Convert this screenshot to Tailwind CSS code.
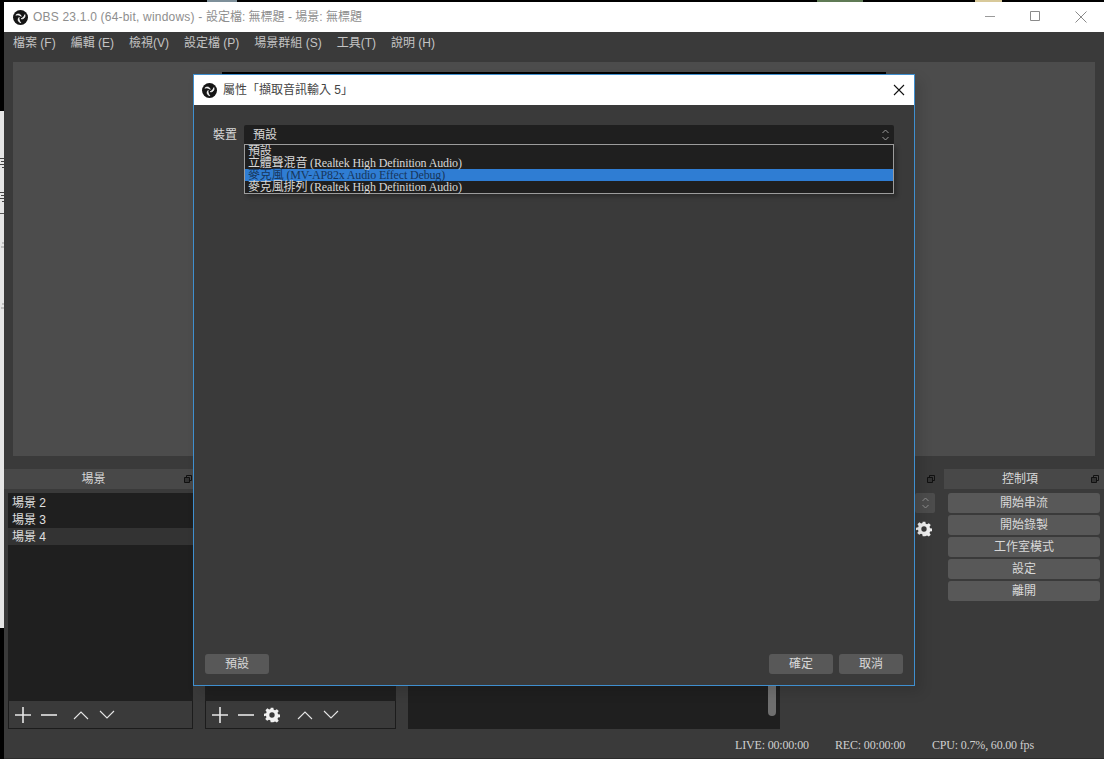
<!DOCTYPE html>
<html lang="zh-Hant">
<head>
<meta charset="UTF-8">
<title>OBS 23.1.0</title>
<script src="https://cdn.jsdelivr.net/npm/@tailwindcss/browser@4"></script>
</head>
<body class="w-[1104px] h-[759px] overflow-hidden bg-black relative font-['Liberation_Sans','Noto_Sans_CJK_TC',sans-serif] text-[12px] text-[#d8d8d8]">

<!-- desktop showing behind the window, only illegible scraps of it are visible -->
<div class="absolute left-0 top-[111px] w-[4px] h-[517px] bg-[#e6e6e6]">
  <svg class="w-[4px] h-[210px]" viewBox="0 0 4 210">
    <path d="M0 47.500h4M1 50.500h3M0 53.500h4M2 56.500h2M0 81.500h4M1 84.500h3M0 87.500h4M2 90.500h2" stroke="#444" fill="none"/>
    <path d="M0 102.500h4" stroke="#555" fill="none"/>
    <path d="M2 132h2M1 136h3M2 193h2M1 197h3" stroke="#999" fill="none"/>
  </svg>
</div>
<span class="absolute left-[207px] top-0 w-[30px] h-[2px] bg-[#7d8f99]"></span>
<span class="absolute left-[817px] top-0 w-[46px] h-[2px] bg-[#5f7a55]"></span>
<span class="absolute left-[975px] top-0 w-[27px] h-[2px] bg-[#d8c99a]"></span>

<!-- main OBS window -->
<div class="absolute left-[4px] top-[2px] w-[1100px] h-[757px] bg-[#3a3a3a] flex flex-col">
  <div class="h-[30px] bg-white flex items-center pl-[9px] shrink-0">
    <svg class="w-[15px] h-[15px]" viewBox="0 0 16 16">
      <circle cx="8" cy="8" r="8" fill="#151515"/>
      <path d="M3 5.500C5 3.500 8 4 8.800 6.800 7.800 5.800 5.500 4.900 3 5.500z" fill="#fff" stroke="#fff" stroke-width=".7"/>
      <path d="M3 5.500C5 3.500 8 4 8.800 6.800 7.800 5.800 5.500 4.900 3 5.500z" fill="#fff" stroke="#fff" stroke-width=".7" transform="rotate(120 8 8)"/>
      <path d="M3 5.500C5 3.500 8 4 8.800 6.800 7.800 5.800 5.500 4.900 3 5.500z" fill="#fff" stroke="#fff" stroke-width=".7" transform="rotate(240 8 8)"/>
    </svg>
    <span class="ml-[5px] text-[12px] text-[#8e8e8e]"><span class="tracking-[0.2px]">OBS 23.1.0 (64-bit, windows) - </span>設定檔: 無標題 - 場景: 無標題</span>
    <div class="ml-auto flex items-center">
      <svg class="w-[46px] h-[30px]" viewBox="0 0 46 30"><path d="M19 14.500h10" stroke="#9a9a9a" fill="none"/></svg>
      <svg class="w-[46px] h-[30px]" viewBox="0 0 46 30"><path d="M18.500 9.500h9v9h-9z" stroke="#8a8a8a" fill="none"/></svg>
      <svg class="w-[46px] h-[30px]" viewBox="0 0 46 30"><path d="M17.500 9.500l11 11M28.500 9.500l-11 11" stroke="#8a8a8a" fill="none"/></svg>
    </div>
  </div>

  <div class="h-[21px] flex items-center pl-[9px] gap-[15px] text-[#c4c4c4] shrink-0">
    <span>檔案 (F)</span><span>編輯 (E)</span><span>檢視(V)</span><span>設定檔 (P)</span><span>場景群組 (S)</span><span>工具(T)</span><span>說明 (H)</span>
  </div>

  <!-- preview area -->
  <div class="mt-[9px] ml-[9px] mr-[9px] h-[394px] bg-[#4c4c4c] shrink-0"></div>

  <!-- docks -->
  <div class="mt-[13px] flex h-[260px] shrink-0">
    <!-- scenes -->
    <div class="w-[189px] flex flex-col">
      <div class="h-[20px] bg-[#484848] flex items-center justify-center relative pr-[10px]">場景
        <svg class="absolute right-[1px] top-[6px] w-[8px] h-[8px]" viewBox="0 0 8 8"><path d="M2.500.5h5v5h-5z" stroke="#111" fill="none"/><path d="M.5 2.500h5v5h-5z" stroke="#111" fill="#333"/></svg>
      </div>
      <div class="ml-[4px] mt-[4px] h-[208px] bg-[#1f1f1f] pt-[1px] text-[12px] text-[#e0e0e0]">
        <div class="h-[17px] leading-[19px] pl-[4px]">場景 2</div>
        <div class="h-[17px] leading-[19px] pl-[4px]">場景 3</div>
        <div class="h-[17px] leading-[19px] pl-[4px] bg-[#333]">場景 4</div>
      </div>
      <div class="ml-[4px] h-[28px] bg-[#3a3a3a] border-x border-b border-[#1c1c1c] flex items-center pl-[6px] gap-[10px]">
        <svg class="w-[16px] h-[16px]" viewBox="0 0 16 16"><path d="M8 0v16M0 8h16" stroke="#e6e6e6" stroke-width="1.600"/></svg>
        <svg class="w-[16px] h-[16px]" viewBox="0 0 16 16"><path d="M0 8h16" stroke="#e6e6e6" stroke-width="1.600"/></svg>
        <svg class="w-[16px] h-[10px] ml-[6px]" viewBox="0 0 16 10"><path d="M1 9l7-7 7 7" stroke="#e6e6e6" fill="none" stroke-width="1.100"/></svg>
        <svg class="w-[16px] h-[10px]" viewBox="0 0 16 10"><path d="M1 1l7 7 7-7" stroke="#e6e6e6" fill="none" stroke-width="1.100"/></svg>
      </div>
    </div>

    <!-- sources -->
    <div class="ml-[12px] w-[191px] flex flex-col justify-end h-[260px]">
      <div class="h-[24px] bg-[#1f1f1f]"></div>
      <div class="h-[28px] bg-[#3a3a3a] border-x border-b border-[#1c1c1c] flex items-center pl-[6px] gap-[10px]">
        <svg class="w-[16px] h-[16px]" viewBox="0 0 16 16"><path d="M8 0v16M0 8h16" stroke="#e6e6e6" stroke-width="1.600"/></svg>
        <svg class="w-[16px] h-[16px]" viewBox="0 0 16 16"><path d="M0 8h16" stroke="#e6e6e6" stroke-width="1.600"/></svg>
        <svg class="w-[16px] h-[16px]" viewBox="0 0 24 24"><path fill="#f0f0f0" fill-rule="evenodd" d="M10 1h4l.6 3.200 2 .8L19.300 3.200l2.800 2.800-1.800 2.700.8 2 3.200.6v4l-3.200.6-.8 2 1.800 2.700-2.800 2.800-2.700-1.800-2 .8L14 23h-4l-.6-3.200-2-.8-2.700 1.800-2.800-2.800 1.800-2.700-.8-2L0 14v-4l3.200-.6.8-2L2.200 4.700 5 2l2.700 1.800 2-.8zM12 8a4 4 0 1 0 0 8 4 4 0 0 0 0-8z"/></svg>
        <svg class="w-[16px] h-[10px] ml-[7px]" viewBox="0 0 16 10"><path d="M1 9l7-7 7 7" stroke="#e6e6e6" fill="none" stroke-width="1.100"/></svg>
        <svg class="w-[16px] h-[10px]" viewBox="0 0 16 10"><path d="M1 1l7 7 7-7" stroke="#e6e6e6" fill="none" stroke-width="1.100"/></svg>
      </div>
    </div>

    <!-- mixer -->
    <div class="ml-[12px] w-[372px] h-[260px] flex flex-col justify-end">
      <div class="h-[52px] bg-[#1f1f1f] relative">
        <span class="absolute right-[4px] top-0 w-[8px] h-[39px] rounded-[4px] bg-[#6f6f6f]"></span>
      </div>
    </div>

    <!-- transitions -->
    <div class="ml-[8px] w-[152px] relative">
      <svg class="absolute right-[5px] top-[6px] w-[8px] h-[8px]" viewBox="0 0 8 8"><path d="M2.500.5h5v5h-5z" stroke="#111" fill="none"/><path d="M.5 2.500h5v5h-5z" stroke="#111" fill="#333"/></svg>
      <div class="absolute left-[127px] top-[24px] w-[20px] h-[20px] bg-[#4c4c4c] rounded-[2px] flex items-center justify-center">
        <svg class="w-[9px] h-[14px]" viewBox="0 0 9 14"><path d="M1.500 5l3-3 3 3M1.500 9l3 3 3-3" stroke="#8f8f8f" fill="none"/></svg>
      </div>
      <svg class="absolute left-[128px] top-[52px] w-[16px] h-[16px]" viewBox="0 0 24 24"><path fill="#f0f0f0" fill-rule="evenodd" d="M10 1h4l.6 3.200 2 .8L19.300 3.200l2.800 2.800-1.800 2.700.8 2 3.200.6v4l-3.200.6-.8 2 1.800 2.700-2.800 2.800-2.700-1.800-2 .8L14 23h-4l-.6-3.200-2-.8-2.700 1.800-2.800-2.800 1.800-2.700-.8-2L0 14v-4l3.200-.6.8-2L2.200 4.700 5 2l2.700 1.800 2-.8zM12 8a4 4 0 1 0 0 8 4 4 0 0 0 0-8z"/></svg>
    </div>

    <!-- controls -->
    <div class="ml-[4px] flex-1 flex flex-col">
      <div class="h-[20px] bg-[#484848] flex items-center justify-center relative pr-[8px]">控制項
        <svg class="absolute right-[5px] top-[6px] w-[8px] h-[8px]" viewBox="0 0 8 8"><path d="M2.500.5h5v5h-5z" stroke="#111" fill="none"/><path d="M.5 2.500h5v5h-5z" stroke="#111" fill="#333"/></svg>
      </div>
      <div class="mt-[4px] ml-[4px] mr-[4px] flex flex-col gap-[2px]">
        <div class="h-[20px] leading-[20px] bg-[#585858] rounded-[3px] text-center">開始串流</div>
        <div class="h-[20px] leading-[20px] bg-[#585858] rounded-[3px] text-center">開始錄製</div>
        <div class="h-[20px] leading-[20px] bg-[#585858] rounded-[3px] text-center">工作室模式</div>
        <div class="h-[20px] leading-[20px] bg-[#585858] rounded-[3px] text-center">設定</div>
        <div class="h-[20px] leading-[20px] bg-[#585858] rounded-[3px] text-center">離開</div>
      </div>
    </div>
  </div>

  <!-- status bar -->
  <div class="flex-1 flex items-center pt-[2px] font-['Liberation_Serif','Noto_Sans_CJK_TC',serif] text-[12px] tracking-[-0.17px] pl-[731px] text-[#cfcfcf] border-b border-[#2c2c2c]">
    <span class="w-[100px]">LIVE: 00:00:00</span><span class="w-[97px]">REC: 00:00:00</span><span>CPU: 0.7%, 60.00 fps</span>
  </div>
</div>

<!-- black sliver of another window right above the dialog -->
<div class="absolute left-[222px] top-[72px] w-[664px] h-[2px] bg-black"></div>

<!-- properties dialog -->
<div class="absolute left-[193px] top-[74px] w-[722px] h-[612px] border border-[#3f8fcf] bg-[#3a3a3a] flex flex-col shadow-[6px_6px_12px_rgba(0,0,0,0.12)]">
  <div class="h-[30px] bg-white flex items-center pl-[8px] shrink-0 text-[#444]">
    <svg class="w-[15px] h-[15px]" viewBox="0 0 16 16">
      <circle cx="8" cy="8" r="8" fill="#151515"/>
      <path d="M3 5.500C5 3.500 8 4 8.800 6.800 7.800 5.800 5.500 4.900 3 5.500z" fill="#fff" stroke="#fff" stroke-width=".7"/>
      <path d="M3 5.500C5 3.500 8 4 8.800 6.800 7.800 5.800 5.500 4.900 3 5.500z" fill="#fff" stroke="#fff" stroke-width=".7" transform="rotate(120 8 8)"/>
      <path d="M3 5.500C5 3.500 8 4 8.800 6.800 7.800 5.800 5.500 4.900 3 5.500z" fill="#fff" stroke="#fff" stroke-width=".7" transform="rotate(240 8 8)"/>
    </svg>
    <span class="ml-[6px]">屬性「擷取音訊輸入 5」</span>
    <svg class="ml-auto mr-[9px] w-[12px] h-[12px]" viewBox="0 0 12 12"><path d="M1 1l10 10M11 1L1 11" stroke="#111" stroke-width="1.100" fill="none"/></svg>
  </div>
  <div class="flex-1 relative">
    <div class="flex items-start mt-[20px] ml-[19px]">
      <span class="w-[31px] h-[20px] leading-[20px]">裝置</span>
      <div class="w-[650px] relative">
        <div class="h-[20px] leading-[20px] bg-[#1f1f1f] rounded-[2px] pl-[9px] relative">預設
          <svg class="absolute right-[4px] top-[3px] w-[9px] h-[14px]" viewBox="0 0 9 14"><path d="M1.500 5l3-3 3 3M1.500 9l3 3 3-3" stroke="#9a9a9a" fill="none"/></svg>
        </div>
        <div class="absolute left-0 top-[19px] w-full h-[50px] border border-[#9c9c9c] bg-[#1f1f1f] text-[12px] leading-[12px] tracking-[-0.15px] font-['Liberation_Serif','Noto_Sans_CJK_TC',serif] shadow-[3px_3px_4px_rgba(0,0,0,0.25)]">
          <div class="h-[12px] pl-[3px]">預設</div>
          <div class="h-[12px] pl-[3px]">立體聲混音 (Realtek High Definition Audio)</div>
          <div class="h-[12px] pl-[3px] bg-[#2f7dd3] text-[#17365c]">麥克風 (MV-AP82x Audio Effect Debug)</div>
          <div class="h-[12px] pl-[3px]">麥克風排列 (Realtek High Definition Audio)</div>
        </div>
      </div>
    </div>
    <div class="absolute left-[11px] right-[11px] bottom-[11px] flex justify-between">
      <div class="w-[64px] h-[20px] leading-[20px] bg-[#585858] rounded-[3px] text-center">預設</div>
      <div class="flex gap-[6px]">
        <div class="w-[64px] h-[20px] leading-[20px] bg-[#585858] rounded-[3px] text-center">確定</div>
        <div class="w-[64px] h-[20px] leading-[20px] bg-[#585858] rounded-[3px] text-center">取消</div>
      </div>
    </div>
  </div>
</div>
</body>
</html>
